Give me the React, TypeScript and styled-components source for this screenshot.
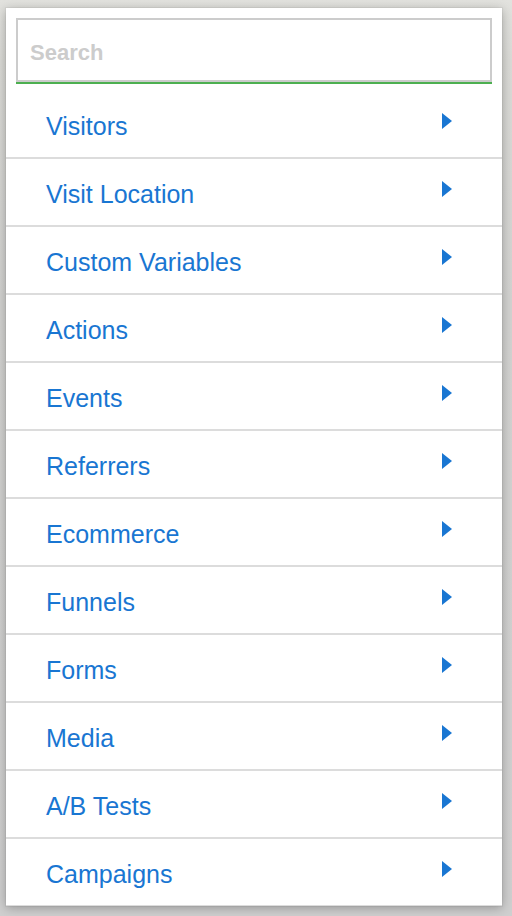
import React from 'react';
import styled, { createGlobalStyle } from 'styled-components';

const categories = [
  'Visitors',
  'Visit Location',
  'Custom Variables',
  'Actions',
  'Events',
  'Referrers',
  'Ecommerce',
  'Funnels',
  'Forms',
  'Media',
  'A/B Tests',
  'Campaigns',
];

const colors = {
  backdrop: '#d3d3d1',
  panel: '#ffffff',
  link: '#1976d2',
  divider: '#dcdcdc',
  inputBorder: '#cccccc',
  placeholder: '#cccccc',
  valid: '#4caf50',
};

const GlobalStyle = createGlobalStyle`
  html, body {
    margin: 0;
    padding: 0;
    background: ${colors.backdrop};
    font-family: "Liberation Sans", Arial, Helvetica, sans-serif;
  }
`;

const Screen = styled.div`
  width: 512px;
  height: 916px;
  box-sizing: border-box;
  padding: 8px 10px 10px 6px;
  background: linear-gradient(
    to bottom,
    #e2e2de 0px,
    #dadad6 60px,
    #d2d2d0 300px,
    #cfcfcf 916px
  );
  overflow: hidden;
`;

const Panel = styled.div`
  display: flex;
  flex-direction: column;
  width: 496px;
  height: 898px;
  background: ${colors.panel};
  box-shadow: 0 2px 10px rgba(0, 0, 0, 0.28), 0 0 0 1px rgba(0, 0, 0, 0.04);
  overflow: hidden;
`;

const SearchBox = styled.div`
  padding: 10px 10px 0 10px;
`;

const SearchField = styled.div`
  border-bottom: 2px solid ${colors.valid};
`;

const SearchInput = styled.input`
  display: block;
  width: 100%;
  height: 64px;
  box-sizing: border-box;
  margin: 0;
  padding: 6px 12px 0 12px;
  border: 2px solid ${colors.inputBorder};
  outline: none;
  background: transparent;
  font-family: "Liberation Sans", Arial, sans-serif;
  font-size: 22px;
  font-weight: bold;
  color: #333;

  &::placeholder {
    color: ${colors.placeholder};
    opacity: 1;
  }
`;

const List = styled.ul`
  list-style: none;
  margin: 7px 0 0 0;
  padding: 0;
`;

const Row = styled.li`
  display: flex;
  align-items: center;
  justify-content: space-between;
  height: 66px;
  padding: 0 50px 0 40px;
  border-bottom: 2px solid ${colors.divider};
  cursor: pointer;
`;

const Label = styled.span`
  padding-top: 4px;
  font-size: 25px;
  color: ${colors.link};
`;

const Caret = styled.svg`
  width: 10px;
  height: 16px;
  margin-bottom: 6px;
  fill: ${colors.link};
`;

const Arrow = () => (
  <Caret viewBox="0 0 10 16">
    <path d="M0 0 L10 8 L0 16 Z" />
  </Caret>
);

export default function App() {
  return (
    <>
      <GlobalStyle />
      <Screen>
        <Panel>
          <SearchBox>
            <SearchField>
              <SearchInput type="text" placeholder="Search" />
            </SearchField>
          </SearchBox>
          <List>
            {categories.map((name) => (
              <Row key={name}>
                <Label>{name}</Label>
                <Arrow />
              </Row>
            ))}
          </List>
        </Panel>
      </Screen>
    </>
  );
}
